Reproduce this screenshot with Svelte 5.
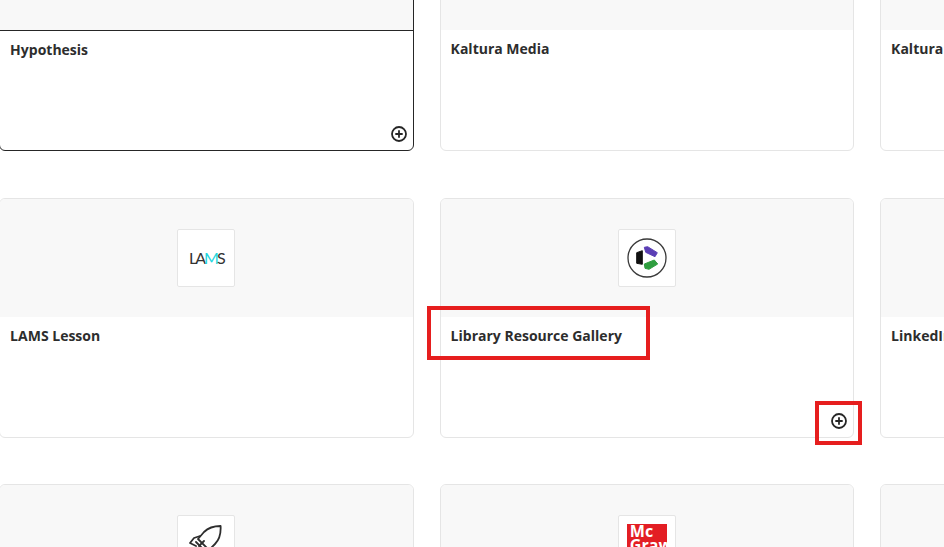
<script>
  const tools = [
    { name: 'Hypothesis', active: true, add: true },
    { name: 'Kaltura Media' },
    { name: 'Kaltura Capture' },
    { name: 'LAMS Lesson', logo: 'lams' },
    { name: 'Library Resource Gallery', logo: 'clover', add: true },
    { name: 'LinkedIn Learning' },
    { name: 'Launch Pad', logo: 'rocket' },
    { name: 'McGraw Hill', logo: 'mcgraw' },
    { name: 'Mediasite' }
  ]
</script>

<main class="page">
  <div class="grid">
    {#each tools as tool}
      <article class="card" class:active={tool.active}>
        <div class="thumb">
          {#if tool.logo}
            <div class="tile">
              {#if tool.logo === 'lams'}
                <span class="lams">LA<span class="cyan">M</span>S</span>
              {:else if tool.logo === 'clover'}
                <svg width="58" height="58" viewBox="0 0 58 58" fill="none" stroke-width="1" stroke-linejoin="round">
                  <circle cx="29" cy="29" r="19" stroke="#3a3a3a" stroke-width="1.3" />
                  <path d="M18.7 23.7 L24.3 21.7 V35.3 L18.7 34.3Z" fill="#111" stroke="#111" />
                  <path d="M26.3 18.3 L29.7 17.7 L39.3 23.7 L37 27.7 L27.7 23.3Z" fill="#5b3fb5" stroke="#5b3fb5" />
                  <path d="M26.3 35 L36.3 31 L39.7 35 L31 40.3 L27 39.3Z" fill="#2f9e3f" stroke="#2f9e3f" />
                </svg>
              {:else if tool.logo === 'rocket'}
                <svg width="58" height="58" viewBox="0 0 58 58" fill="none" stroke="#2d2d2d" stroke-width="1.8" stroke-linejoin="round" stroke-linecap="round">
                  <path d="M43.6 11 C37 11 31 13 27 17 L21 24 L32 35 L38 29 C42 25 44 18 43.6 11Z" />
                  <path d="M23 21 L17 23 L13 28 L19 31" />
                  <path d="M19 27 L27 35" />
                  <path d="M27 26 L22 31" />
                </svg>
              {:else if tool.logo === 'mcgraw'}
                <div class="mcgraw">Mc<br />Graw</div>
              {/if}
            </div>
          {/if}
        </div>
        <div class="title">{tool.name}</div>
        {#if tool.add}
          <button class="add" type="button" aria-label="Add {tool.name}">
            <svg width="16" height="16" viewBox="0 0 16 16" fill="none" stroke="#262626">
              <circle cx="8" cy="8" r="7" stroke-width="1.8" />
              <path d="M8 4.3 V11.7 M4.3 8 H11.7" stroke-width="1.8" />
            </svg>
          </button>
        {/if}
      </article>
    {/each}
  </div>

  <div class="callout title-callout"></div>
  <div class="callout add-callout"></div>
</main>

<style>
  :global(body) {
    background: #fff;
    overflow: hidden;
  }
  .page {
    position: relative;
    width: 944px;
    height: 547px;
    overflow: hidden;
    font-family: "Open Sans", "Liberation Sans", sans-serif;
    color: #2d2d2d;
  }
  .grid {
    display: grid;
    grid-template-columns: repeat(3, 414.5px);
    grid-auto-rows: 240px;
    column-gap: 26px;
    row-gap: 46.5px;
    margin: -88.6px 0 0 -0.9px;
  }
  .card {
    display: flex;
    flex-direction: column;
    border: 1px solid #e5e5e5;
    border-radius: 6px;
    background: #fff;
    overflow: hidden;
  }
  .card.active {
    border-color: #262626;
  }
  .thumb {
    flex: 0 0 118px;
    display: flex;
    align-items: center;
    justify-content: center;
    background: #f8f8f8;
  }
  .active .thumb {
    border-bottom: 1px solid #262626;
  }
  .tile {
    width: 58px;
    height: 58px;
    box-sizing: border-box;
    display: flex;
    align-items: center;
    justify-content: center;
    background: #fff;
    border: 1px solid #e5e5e5;
    border-radius: 2px;
  }
  .tile svg {
    flex: none;
    margin: -1px;
  }
  .lams {
    font-size: 16px;
    font-weight: 400;
    letter-spacing: -2px;
    color: #333;
    font-family: "Lato", sans-serif;
  }
  .cyan {
    color: #22d6de;
  }
  .mcgraw {
    width: 40px;
    height: 40px;
    box-sizing: border-box;
    padding: 1px 0 0 3px;
    background: #e31e24;
    color: #fff;
    font-size: 16px;
    font-weight: 700;
    line-height: 13.5px;
    overflow: hidden;
  }
  .title {
    flex: 1;
    padding: 9px 10px 0;
    font-size: 14px;
    font-weight: 700;
    line-height: 20px;
  }
  .add {
    align-self: flex-end;
    display: flex;
    padding: 0;
    margin: 0 6px 8px 0;
    border: 0;
    background: none;
  }
  .callout {
    position: absolute;
    box-sizing: border-box;
    border: 4px solid #e61e1e;
  }
  .title-callout {
    left: 427px;
    top: 306px;
    width: 223px;
    height: 54px;
  }
  .add-callout {
    left: 815px;
    top: 401px;
    width: 47px;
    height: 44px;
  }
</style>
